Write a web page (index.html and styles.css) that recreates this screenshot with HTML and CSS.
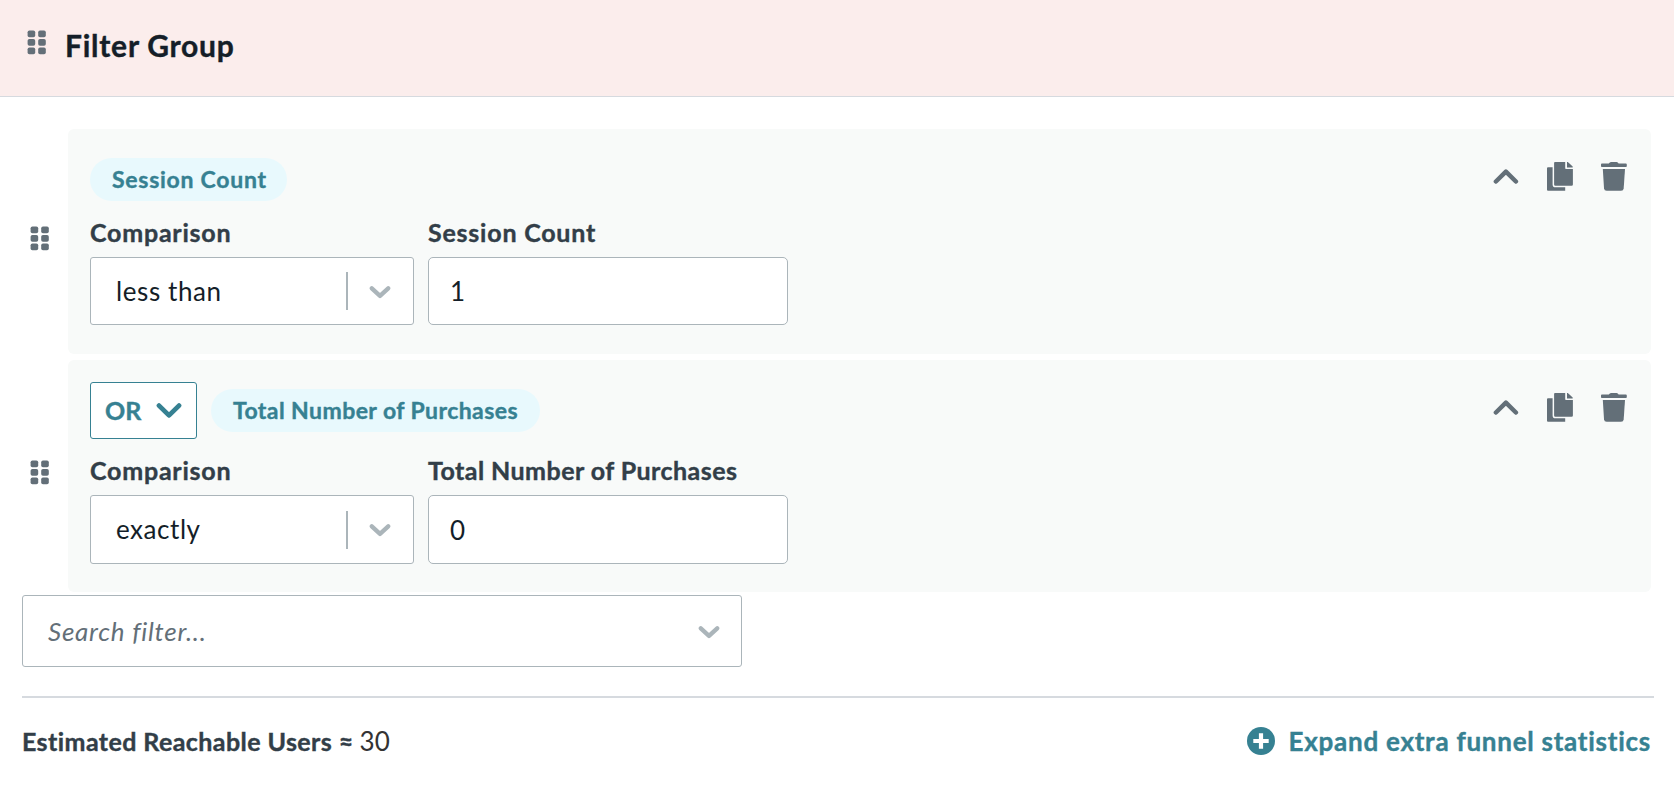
FILE: index.html
```html
<!DOCTYPE html>
<html lang="en">
<head>
<meta charset="utf-8">
<title>Filter Group</title>
<link rel="stylesheet" href="styles.css">
</head>
<body>
<svg class="sprite" aria-hidden="true">
  <symbol id="grip" viewBox="0 0 19 25">
    <rect x="0.6" y="0.4" width="7.6" height="6.8" rx="1.8"/><rect x="11.2" y="0.4" width="7.6" height="6.8" rx="1.8"/>
    <rect x="0.6" y="8.9" width="7.6" height="6.8" rx="1.8"/><rect x="11.2" y="8.9" width="7.6" height="6.8" rx="1.8"/>
    <rect x="0.6" y="17.5" width="7.6" height="6.8" rx="1.8"/><rect x="11.2" y="17.5" width="7.6" height="6.8" rx="1.8"/>
  </symbol>
  <symbol id="down" viewBox="0 0 22 14">
    <path d="M2.8 3.3 11 10.9 19.2 3.3" fill="none" stroke="currentColor" stroke-width="4.3" stroke-linecap="round" stroke-linejoin="round"/>
  </symbol>
  <symbol id="down-bold" viewBox="0 0 26 17">
    <path d="M3 3.6 13 13.4 23 3.6" fill="none" stroke="currentColor" stroke-width="4.8" stroke-linecap="round" stroke-linejoin="round"/>
  </symbol>
  <symbol id="up" viewBox="0 0 26 16">
    <path d="M2.9 12.5 12.9 2.6 22.9 12.5" fill="none" stroke="currentColor" stroke-width="4.5" stroke-linecap="round" stroke-linejoin="round"/>
  </symbol>
  <symbol id="copy" viewBox="0 0 26 29">
    <path d="M1 5.3H5.6V22.4Q5.6 25.3 8.5 25.3H18.2V28.8H1Q0 28.8 0 27.8V6.3Q0 5.3 1 5.3Z"/>
    <path d="M8 0H18.2V6.2Q18.2 7 19 7H25.9V22.5Q25.9 23.8 24.6 23.8H8.3Q7.1 23.8 7.1 22.5V.9Q7.1 0 8 0Z"/>
    <path d="M20 0H20.8L25.7 4.6V5.6H20Z"/>
  </symbol>
  <symbol id="trash" viewBox="0 0 26 29">
    <path d="M.9 1.6H7.8Q8.7 0 10 0H15.6Q17 0 17.6 1.6H24.9Q25.8 1.6 25.8 2.5V4.2Q25.8 5 24.9 5H.9Q0 5 0 4.2V2.5Q0 1.6.9 1.6Z"/>
    <path d="M1.8 7H24L22.7 26.3Q22.5 28.8 20 28.8H5.7Q3.2 28.8 3 26.3Z"/>
  </symbol>
</svg>

<header class="group-header">
  <svg class="grip"><use href="#grip"/></svg>
  <h1 class="group-title">Filter Group</h1>
</header>

<main class="group-body">
  <section class="filter">
    <svg class="grip"><use href="#grip"/></svg>
    <div class="card">
      <div class="card-head card-head--first">
        <span class="pill pill--spaced">Session Count</span>
      </div>
      <div class="actions">
        <svg class="icon-up"><use href="#up"/></svg>
        <svg class="icon"><use href="#copy"/></svg>
        <svg class="icon"><use href="#trash"/></svg>
      </div>
      <div class="fields">
        <div class="field field--comparison">
          <span class="label">Comparison</span>
          <div class="select"><span class="value">less than</span><i class="separator"></i><svg class="chevron"><use href="#down"/></svg></div>
        </div>
        <div class="field field--value">
          <span class="label">Session Count</span>
          <div class="input">1</div>
        </div>
      </div>
    </div>
  </section>

  <section class="filter">
    <svg class="grip"><use href="#grip"/></svg>
    <div class="card card--joined">
      <div class="card-head">
        <span class="operator"><span class="operator-name">OR</span><svg class="operator-chevron"><use href="#down-bold"/></svg></span>
        <span class="pill">Total Number of Purchases</span>
      </div>
      <div class="actions">
        <svg class="icon-up"><use href="#up"/></svg>
        <svg class="icon"><use href="#copy"/></svg>
        <svg class="icon"><use href="#trash"/></svg>
      </div>
      <div class="fields">
        <div class="field field--comparison">
          <span class="label">Comparison</span>
          <div class="select"><span class="value value--tight">exactly</span><i class="separator"></i><svg class="chevron"><use href="#down"/></svg></div>
        </div>
        <div class="field field--value">
          <span class="label label--long">Total Number of Purchases</span>
          <div class="input">0</div>
        </div>
      </div>
    </div>
  </section>

  <div class="search"><span class="placeholder">Search filter...</span><svg class="chevron"><use href="#down"/></svg></div>

  <footer class="footer">
    <div class="estimate"><strong class="estimate-label">Estimated Reachable Users ≈</strong><span class="estimate-value">30</span></div>
    <div class="expand">
      <svg class="plus" viewBox="0 0 28 28"><circle cx="14" cy="14" r="14" fill="currentColor"/><path d="M14 6.3V21.7M6.3 14H21.7" stroke="#fff" stroke-width="4.2"/></svg>
      <span>Expand extra funnel statistics</span>
    </div>
  </footer>
</main>
</body>
</html>
```
FILE: styles.css
```css
* { box-sizing: border-box; }
body {
  margin: 0;
  background: #fff;
  color: #323e48;
  font-family: Lato, "Liberation Sans", sans-serif;
  font-size: 25px;
  line-height: 28px;
}
svg { display: block; flex: none; }
.sprite { position: absolute; width: 0; height: 0; }
.grip { width: 19px; height: 25px; fill: #636f78; }

.group-header {
  display: flex;
  gap: 19px;
  height: 97px;
  padding: 27px 27px 0;
  background: #fbedec;
  border-bottom: 1px solid #d6dadf;
}
.group-header .grip { margin-top: 3px; }
.group-title {
  margin: 0;
  color: #141e28;
  font-size: 30px;
  line-height: 36px;
  font-weight: 700;
  letter-spacing: .76px;
}
.group-title, .pill, .label, .operator, .estimate-label, .expand { -webkit-text-stroke: .4px currentColor; }

.group-body { padding: 32px 20px 0 22px; }
.filter {
  display: flex;
  align-items: center;
  gap: 19px;
  margin: 0 3px 6px 8px;
}
.filter .grip { margin-bottom: 7px; }
.filter + .search { margin-top: -3px; }
.card {
  display: grid;
  grid-template-columns: 1fr auto;
  flex: 1;
  row-gap: 17px;
  height: 225px;
  padding: 22px 24px 0 22px;
  align-content: start;
  background: #f8faf9;
  border-radius: 6px;
}
.card--joined { height: 232px; }
.card-head { display: flex; align-items: center; gap: 14px; height: 57px; }
.card-head--first { height: 50px; padding-top: 7px; }

.pill {
  height: 43px;
  padding: 7px 22px 0 22px;
  border-radius: 22px;
  background: #e8f9fd;
  color: #368192;
  font-size: 23px;
  font-weight: 700;
  letter-spacing: .43px;
}
.pill--spaced { padding-right: 20px; letter-spacing: .73px; }
.operator {
  display: flex;
  align-items: center;
  justify-content: space-between;
  width: 107px;
  height: 57px;
  padding: 0 14px;
  background: #fff;
  border: 1px solid #368192;
  border-radius: 3px;
  color: #368192;
  font-weight: 700;
}
.operator-name { padding-bottom: 2px; }
.operator-chevron { width: 26px; height: 17px; }

.actions { display: flex; gap: 28px; padding-top: 11px; color: #636f78; fill: currentColor; }
.icon { width: 26px; height: 29px; }
.icon-up { width: 26px; height: 16px; margin-top: 7px; }

.fields { grid-column: 1 / -1; display: flex; gap: 14px; }
.field { display: flex; flex-direction: column; gap: 11px; }
.field--comparison { width: 324px; }
.field--value { width: 360px; }
.label { font-weight: 700; letter-spacing: .78px; }
.label--long { letter-spacing: .45px; }
.select, .input, .search {
  display: flex;
  align-items: center;
  height: 68px;
  background: #fff;
  border: 1px solid #abb5ba;
  border-radius: 3px;
  font-size: 26px;
}
.card--joined .select, .card--joined .input { height: 69px; }
.select { padding: 0 22px 0 25px; color: #141e28; }
.value { flex: 1; padding-bottom: 1px; letter-spacing: .6px; }
.value--tight { letter-spacing: .55px; }
.separator { width: 2px; height: 38px; margin-right: 21px; background: #abb5ba; }
.chevron { width: 22px; height: 14px; margin-top: 1px; color: #abb5ba; }
.input { padding-left: 21px; border-radius: 5px; color: #141e28; }

.search { width: 720px; height: 72px; padding: 0 21px 0 25px; }
.placeholder { flex: 1; padding-bottom: 1px; color: #636f78; font-style: italic; letter-spacing: .75px; }

.footer {
  display: flex;
  align-items: center;
  justify-content: space-between;
  height: 88px;
  margin-top: 29px;
  padding-right: 3px;
  border-top: 2px solid #d6dadf;
}
.estimate { display: flex; gap: 6px; }
.estimate-label { font-weight: 700; letter-spacing: .42px; }
.estimate-value { color: #333; font-size: 26px; }
.expand {
  display: flex;
  align-items: center;
  gap: 14px;
  color: #368192;
  font-size: 26px;
  font-weight: 700;
  letter-spacing: .74px;
}
.plus { width: 28px; height: 28px; }
```
